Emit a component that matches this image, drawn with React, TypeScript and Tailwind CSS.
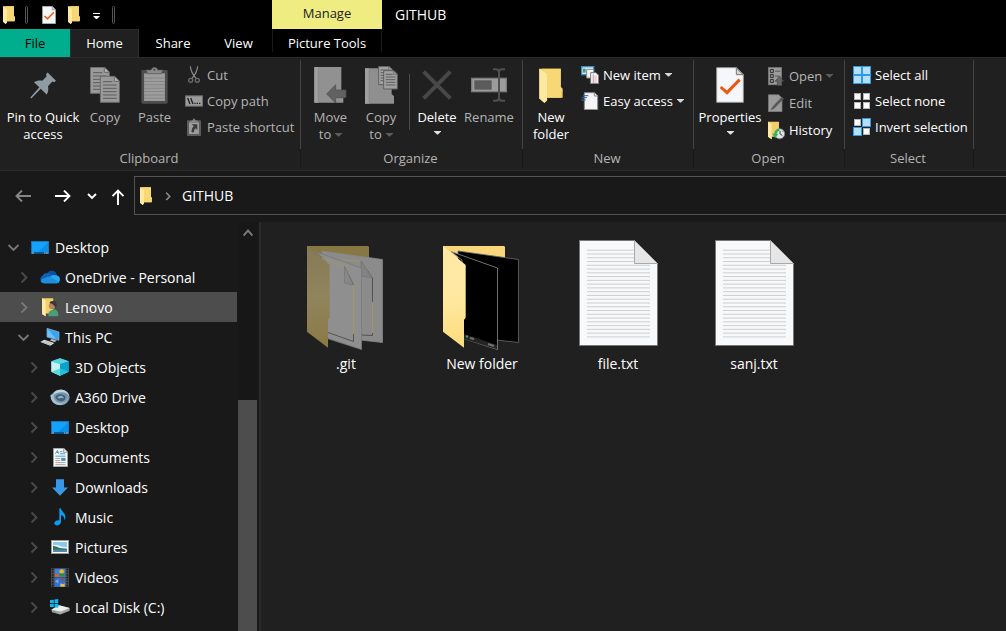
import React from "react";

type IconProps = { w: number; h: number; box: string; children: React.ReactNode };

function Svg({ w, h, box, children }: IconProps) {
  return (
    <svg width={w} height={h} viewBox={box} fill="none" aria-hidden="true" className="shrink-0">
      {children}
    </svg>
  );
}

/* ---------- shared glyphs ---------- */

function Caret({ className = "" }: { className?: string }) {
  return (
    <svg width="7" height="4" viewBox="0 0 7 4" aria-hidden="true" className={"shrink-0 " + className}>
      <path d="M0 0H7V0.500L4 3.500H3L0 0.500Z" fill="currentColor" />
    </svg>
  );
}

function Chevron({ open = false, className = "" }: { open?: boolean; className?: string }) {
  return (
    <svg width="12" height="12" viewBox="0 0 12 12" fill="none" aria-hidden="true" className={"shrink-0 " + className}>
      <path d={open ? "M0.500 4L5.500 9L10.500 4" : "M3.500 1.500L8.500 6.500L3.500 11.500"} stroke="currentColor" strokeWidth="1.900" />
    </svg>
  );
}

function FolderIcon({ w = 12, h = 18 }: { w?: number; h?: number }) {
  return (
    <Svg w={w} h={h} box="0 0 36 54">
      <path d="M0 1H33V32L36 36V46H8V54L0 47Z" fill="#f3cf6a" />
      <path d="M0 1L12 9V50L8 54L0 47Z" fill="#ffe9a2" />
      <path d="M12 9V46H33V36H36V32L33 29V1H4Z" fill="#f8d775" />
    </Svg>
  );
}

/* ---------- ribbon icons ---------- */

const PinIcon = () => (
  <Svg w={26} h={27} box="0 0 78 80">
    <path
      d="M53 1L78 26L72 30L67 28L54 42C56 50 55 60 50 67L32 50L4 79L1 76L28 45L12 30C20 25 30 24 37 26L50 12L48 6Z"
      fill="#8e9ba3"
    />
  </Svg>
);

const Sheet = ({ x, y }: { x: number; y: number }) => (
  <g transform={`translate(${x} ${y})`}>
    <path d="M1 1H44L58 15V79H1Z" fill="#9a9a9a" stroke="#6b6b6b" strokeWidth="3" />
    <path d="M43 2V16H57" fill="#b5b5b5" stroke="#5f5f5f" strokeWidth="2.500" />
    <path d="M9 17H37M9 27H50M9 37H50M9 47H50M9 57H50M9 67H50" stroke="#5c5c5c" strokeWidth="3" />
  </g>
);

const CopyIcon = () => (
  <Svg w={30} h={36} box="0 0 90 108">
    <Sheet x={0} y={0} />
    <Sheet x={30} y={27} />
  </Svg>
);

const PasteIcon = () => (
  <Svg w={27} h={37} box="0 0 80 110">
    <rect x="1" y="9" width="78" height="100" rx="4" fill="#4d4d4d" />
    <rect x="9" y="19" width="62" height="82" fill="#9d9d9d" />
    <path d="M9 33H71M9 43H71M9 53H71M9 63H71M9 73H71M9 83H71M9 93H71" stroke="#868686" strokeWidth="3" />
    <path d="M15 9H30Q32 1 40 1T50 9H65L60 20H20Z" fill="#8b8b8b" stroke="#555" strokeWidth="2" />
    <circle cx="40" cy="8" r="3" fill="#444" />
  </Svg>
);

const CutIcon = () => (
  <Svg w={12} h={18} box="0 0 36 54">
    <path d="M7 1C8 14 14 25 24 37M29 1C28 14 22 25 12 37" stroke="#8c8c8c" strokeWidth="3.500" />
    <circle cx="8" cy="43" r="6" stroke="#6d6d6d" strokeWidth="4" />
    <circle cx="28" cy="43" r="6" stroke="#6d6d6d" strokeWidth="4" />
  </Svg>
);

const CopyPathIcon = () => (
  <Svg w={18} h={12} box="0 0 54 34">
    <rect x="1.500" y="1.500" width="51" height="31" fill="#9b9b9b" stroke="#6e6e6e" strokeWidth="3" />
    <path d="M8 8L15 26M17 8L24 26" stroke="#222" strokeWidth="4" />
    <path d="M28 24H32M35 24H39M42 24H46" stroke="#222" strokeWidth="4" />
  </Svg>
);

const PasteShortcutIcon = () => (
  <Svg w={14} h={18} box="0 0 42 54">
    <rect x="0" y="7" width="42" height="47" rx="2" fill="#5c5c5c" />
    <rect x="6" y="13" width="30" height="35" fill="#9c9c9c" />
    <path d="M9 8H15L21 1L27 8H33V13H9Z" fill="#858585" />
    <path d="M14 19H31V36L26 31C22 34 21 38 21 43H14C13 36 15 30 20 25Z" fill="#3b3b3b" />
  </Svg>
);

const MoveToIcon = () => (
  <Svg w={33} h={36} box="0 0 97 108">
    <path d="M0 0H81V78L87 84V107H0Z" fill="#919191" />
    <path d="M0 0H12V107H0Z" fill="#9f9f9f" />
    <path d="M12 4V105" stroke="#868686" strokeWidth="2" />
    <path d="M37 81L64 53V69H95V92H64V108Z" fill="#616161" stroke="#4b4b4b" strokeWidth="2" />
  </Svg>
);

const MiniSheet = ({ x, y }: { x: number; y: number }) => (
  <g transform={`translate(${x} ${y})`}>
    <path d="M1 1H32L42 11V56H1Z" fill="#a0a0a0" stroke="#5f5f5f" strokeWidth="3" />
    <path d="M7 12H28M7 20H36M7 28H36M7 36H36M7 44H36" stroke="#5e5e5e" strokeWidth="3" />
    <path d="M31 2V12H41" stroke="#5f5f5f" strokeWidth="2" />
  </g>
);

const CopyToIcon = () => (
  <Svg w={33} h={38} box="0 0 99 114">
    <path d="M0 7H80V85L87 90V113H0Z" fill="#8f8f8f" />
    <path d="M0 7H12V113H0Z" fill="#9f9f9f" />
    <path d="M12 11V111" stroke="#858585" strokeWidth="2" />
    <MiniSheet x={40} y={0} />
    <MiniSheet x={55} y={13} />
  </Svg>
);

const DeleteIcon = () => (
  <Svg w={30} h={30} box="0 0 90 90">
    <path d="M5 5L85 85M85 5L5 85" stroke="#484848" strokeWidth="12" />
  </Svg>
);

const RenameIcon = () => (
  <Svg w={36} h={34} box="0 0 108 102">
    <rect x="2" y="31" width="104" height="40" fill="#9c9c9c" stroke="#7a7a7a" strokeWidth="4" />
    <rect x="10" y="37" width="52" height="28" fill="#5b5b5b" />
    <path d="M84 8V94M66 4H74Q84 4 84 13Q84 4 94 4H102M66 98H74Q84 98 84 89Q84 98 94 98H102" stroke="#4f4f4f" strokeWidth="6" />
  </Svg>
);

const NewItemIcon = () => (
  <Svg w={18} h={18} box="0 0 54 54">
    <rect x="2" y="2" width="36" height="24" fill="#d9eef8" stroke="#3b8fbd" strokeWidth="4" />
    <rect x="6" y="8" width="8" height="12" fill="#4d957c" />
    <path d="M17 10H38V36H17Z" fill="#f4f4f4" stroke="#8b8b8b" strokeWidth="3" />
    <path d="M29 20H45L53 28V53H29Z" fill="#fff" stroke="#777" strokeWidth="3" />
    <path d="M34 30H49M34 36H49M34 42H49M34 48H49" stroke="#ec9a9a" strokeWidth="2.500" />
    <path d="M37 22V52" stroke="#7fa6d8" strokeWidth="2" />
  </Svg>
);

const EasyAccessIcon = () => (
  <Svg w={18} h={18} box="0 0 54 54">
    <path d="M10 2H41L50 11V53H10Z" fill="#f5f5f7" stroke="#888" strokeWidth="3" />
    <path d="M40 3V12H49" stroke="#888" strokeWidth="3" />
    <path d="M6 11H22M2 17H18M0 24H14" stroke="#2a6ca4" strokeWidth="3" />
  </Svg>
);

const CheckPage = ({ w, h }: { w: number; h: number }) => (
  <Svg w={w} h={h} box="0 0 84 108">
    <path d="M2 2H62L82 22V106H2Z" fill="#f6f7fa" stroke="#979797" strokeWidth="3" />
    <path d="M61 3V23H81Z" fill="#d6d6d6" stroke="#777" strokeWidth="3" />
    <path d="M14 60L33 77L71 38" stroke="#f0560f" strokeWidth="9" />
  </Svg>
);

const OpenIcon = () => (
  <Svg w={16} h={19} box="0 0 48 56">
    <rect x="1" y="1" width="40" height="52" fill="#9b9b9b" stroke="#777" strokeWidth="2" />
    <path d="M7 7H16V16H7ZM7 22H16V31H7ZM7 37H16V46H7Z" fill="#8f8f8f" stroke="#333" strokeWidth="3" />
    <path d="M21 12H37M21 27H37" stroke="#555" strokeWidth="3" />
    <path d="M34 28L47 42H41V55H28V42H21Z" fill="#666" stroke="#444" strokeWidth="2" />
  </Svg>
);

const EditIcon = () => (
  <Svg w={16} h={18} box="0 0 48 54">
    <path d="M1 2H32L42 12V53H1Z" fill="#9a9a9a" stroke="#777" strokeWidth="2" />
    <path d="M8 49L13 39L41 9L47 14L18 44Z" fill="#555" stroke="#777" strokeWidth="1" />
  </Svg>
);

const HistoryIcon = () => (
  <Svg w={17} h={19} box="0 0 51 56">
    <path d="M0 2H33V47H11V54L0 47Z" fill="#f3cf6a" />
    <path d="M0 2L11 9V54L0 47Z" fill="#ffe9a2" />
    <circle cx="35" cy="38" r="15" fill="#dfe3e3" stroke="#7f8a8a" strokeWidth="2" />
    <path d="M36 38V29M36 38L43 43M44 31L46 29" stroke="#444" strokeWidth="3" />
    <path d="M33 22Q19 26 19 38H12L22 51L31 38H26Q27 31 35 28Z" fill="#35b556" />
  </Svg>
);

type Cell = "blue" | "white";
const Tiles = ({ cells, backed = false }: { cells: Cell[]; backed?: boolean }) => (
  <Svg w={18} h={18} box="0 0 18 18">
    {backed && <rect width="18" height="18" fill="#2f9be8" />}
    {cells.map((c, i) => {
      const x = i % 2 === 0 ? 1 : 10;
      const y = i < 2 ? 1 : 10;
      return c === "blue" ? (
        <g key={i}>
          <rect x={x - 1} y={y - 1} width="9" height="9" fill="#2f9be8" />
          <rect x={x} y={y} width="7" height="7" fill="#b5dffc" />
        </g>
      ) : (
        <rect key={i} x={x + 0.5} y={y + 0.5} width="6" height="6" fill="#fff" stroke="#b5b5b5" />
      );
    })}
  </Svg>
);

/* ---------- ribbon parts ---------- */

type BigProps = {
  icon: React.ReactNode;
  lines: string[];
  width: string;
  dim?: boolean;
  inlineCaret?: boolean;
  caret?: boolean;
};

function BigButton({ icon, lines, width, dim, inlineCaret, caret }: BigProps) {
  return (
    <button
      type="button"
      className={`flex shrink-0 flex-col items-center pt-2 text-[13px] leading-[17px] whitespace-nowrap ${width} ${dim ? "text-[#b4b4b4]" : "text-white"}`}
    >
      <span className="mb-[5px] flex h-[38px] items-center">{icon}</span>
      {lines.map((line, i) => (
        <span key={line} className="flex items-center gap-1">
          {line}
          {inlineCaret && i === lines.length - 1 && <Caret className="text-[#5a5a5a]" />}
        </span>
      ))}
      {caret && (
        <span className="flex h-[14px] items-center">
          <Caret className="text-[#e0e0e0]" />
        </span>
      )}
    </button>
  );
}

type SmallProps = { icon: React.ReactNode; label: string; dim?: boolean; caret?: boolean };

function SmallButton({ icon, label, dim, caret }: SmallProps) {
  return (
    <button
      type="button"
      className={`flex h-[26px] items-center gap-1 text-[13px] leading-[18px] whitespace-nowrap ${dim ? "text-[#b4b4b4]" : "text-white"}`}
    >
      <span className="flex w-[18px] justify-center">{icon}</span>
      <span>{label}</span>
      {caret && <Caret className={dim ? "text-[#5a5a5a]" : "text-[#d8d8d8]"} />}
    </button>
  );
}

function Group({ label, width, children }: { label: string; width: string; children: React.ReactNode }) {
  return (
    <section aria-label={label} className={`flex shrink-0 flex-col ${width}`}>
      <div className="mt-[2px] flex h-[89px] shrink-0 border-r border-[#444]">
        <div className="-mt-[2px] flex w-full">{children}</div>
      </div>
      <h2 className="border-r border-[#191919] pr-[2px] text-center text-[13px] leading-[19px] text-[#b4b4b4]">{label}</h2>
    </section>
  );
}

/* ---------- tree icons ---------- */

const DesktopIcon = () => (
  <Svg w={18} h={13} box="0 0 54 39">
    <rect x="1" y="1" width="52" height="37" fill="#16a1fb" stroke="#0b79c4" strokeWidth="2" />
    <path d="M20 35L52 3V35Z" fill="#0b90ea" />
    <path d="M3 36H51" stroke="#0d3d66" strokeWidth="4" />
    <path d="M4 36H8M40 36H43M46 36H50" stroke="#fff" strokeWidth="3" />
  </Svg>
);

const OneDriveIcon = () => (
  <Svg w={20} h={14} box="0 0 60 40">
    <path d="M10 37A11 11 0 0 1 8 16C12 8 20 9 22 9C28 -3 48 -2 50 15C60 16 62 30 56 35Z" fill="#0f62b8" />
    <path d="M22 9C30 9 36 16 50 15C48 -2 28 -3 22 9Z" fill="#0a4ea3" />
    <path d="M2 32C8 24 24 24 32 18C38 14 46 13 52 16C64 20 61 38 50 39H12Q5 38 2 32Z" fill="#28a8ea" />
    <path d="M2 32C8 24 24 18 32 20L58 36Q55 39 50 39H12Q5 38 2 32Z" fill="#1c8fe0" />
  </Svg>
);

const UserFolderIcon = () => (
  <Svg w={17} h={19} box="0 0 50 56">
    <path d="M0 1H33V46H10V54L0 47Z" fill="#f3cf6a" />
    <path d="M0 1L11 8V54L0 47Z" fill="#ffe9a2" />
    <path d="M19 54Q17 39 28 35L39 33Q50 39 48 54Z" fill="#4a9c78" />
    <circle cx="30" cy="23" r="10" fill="#b5895f" />
    <path d="M22 15Q24 7 34 9Q45 11 43 25L39 31Q38 19 22 15Z" fill="#3a3632" />
  </Svg>
);

const PcIcon = () => (
  <Svg w={20} h={18} box="0 0 58 54">
    <path d="M20 1L56 12V37L20 27Z" fill="#36a4f5" stroke="#9fb5c6" strokeWidth="2" />
    <path d="M21 2L48 33L21 26Z" fill="#72c0f8" />
    <path d="M35 33L50 38L42 42L28 37Z" fill="#bfc5cb" />
    <path d="M0 42L12 35L42 45L30 53Z" fill="#e1e4e8" />
    <path d="M7 42L30 50M12 39L35 47" stroke="#979da6" strokeWidth="2" />
  </Svg>
);

const CubeIcon = () => (
  <Svg w={18} h={18} box="0 0 56 54">
    <path d="M28 0L55 9V42L28 54L1 42V9Z" fill="#20b4cf" />
    <path d="M1 9L28 18V54L1 42Z" fill="#c4f3f5" />
    <path d="M28 18L55 9V42L28 54Z" fill="#08a0cc" />
    <path d="M1 42L28 32V54Z" fill="#5bd7de" />
    <path d="M28 32L55 42L28 54Z" fill="#25c1dc" />
    <path d="M1 9L28 0L55 9L28 18Z" fill="#5bd2dd" />
  </Svg>
);

const A360Icon = () => (
  <Svg w={20} h={17} box="0 0 60 50">
    <ellipse cx="31" cy="25" rx="28" ry="23" fill="#7493ab" />
    <path d="M10 18Q12 2 34 1Q56 4 59 24Q52 9 36 9Q18 9 10 18Z" fill="#c0d4df" />
    <path d="M1 18Q6 14 12 16Q9 32 22 39Q34 45 50 36Q40 49 24 47Q2 41 1 18Z" fill="#a9c1cf" />
    <path d="M16 24Q20 14 34 15Q48 18 46 28Q43 36 33 36Q21 34 16 24Z" fill="#3f5f78" />
    <path d="M22 25Q26 19 35 20Q43 23 41 28Q36 25 31 27Q26 29 22 25Z" fill="#93adbf" />
    <path d="M52 20Q57 34 46 42Q38 47 28 46Q44 42 49 32Z" fill="#8fabbd" />
  </Svg>
);

const DocumentIcon = () => (
  <Svg w={15} h={19} box="0 0 44 56">
    <path d="M1 1H32L43 12V55H1Z" fill="#f8f8f8" stroke="#999" strokeWidth="2" />
    <path d="M31 2V13H42" fill="#ddd" stroke="#888" strokeWidth="2" />
    <path d="M7 17L13 7L16 17M10 13H16" stroke="#2b8ac8" strokeWidth="2.500" />
    <path d="M20 11H28M20 17H36M7 24H37" stroke="#2b8ac8" strokeWidth="2.500" />
    <path d="M7 31H21M7 37H21M7 43H37M7 49H37" stroke="#999" strokeWidth="2.500" />
    <rect x="24" y="29" width="13" height="9" fill="#4e8fba" />
  </Svg>
);

const DownloadIcon = () => (
  <Svg w={16} h={17} box="0 0 48 50">
    <path d="M12 0H36V25H48L24 50L0 25H12Z" fill="#3997e8" />
  </Svg>
);

const MusicIcon = () => (
  <Svg w={12} h={18} box="0 0 36 52">
    <path d="M16 0H20C22 10 36 15 34 28Q34 32 31 36Q32 23 21 20V41C20 49 12 52 6 51Q-1 48 1 43Q4 35 16 36Z" fill="#0a9cf7" />
  </Svg>
);

const PictureIcon = () => (
  <Svg w={18} h={14} box="0 0 54 42">
    <rect x="1.500" y="1.500" width="51" height="39" fill="#fff" stroke="#9a9a9a" strokeWidth="3" />
    <rect x="6" y="6" width="42" height="30" fill="#8fc8ef" />
    <path d="M6 15Q16 12 26 17T48 21V25H6Z" fill="#e0f1fb" />
    <path d="M6 17Q18 19 26 24L48 27V30H6Z" fill="#39705d" />
    <path d="M6 29H48V36H6Z" fill="#4f8cab" />
  </Svg>
);

const VideoIcon = () => (
  <Svg w={18} h={19} box="0 0 54 56">
    <rect width="54" height="56" fill="#4e4e4e" />
    <path d="M5 2V56M49 2V56" stroke="#161616" strokeWidth="5" strokeDasharray="4 4" />
    <rect x="11" y="2" width="32" height="25" fill="#3f7fdd" />
    <rect x="11" y="30" width="32" height="26" fill="#356fd2" />
    <path d="M12 18Q20 14 27 25H12Z" fill="#e8553d" />
    <circle cx="32" cy="10" r="7" fill="#e6b92d" />
    <path d="M24 16H41V25H26Z" fill="#2e8b45" />
    <path d="M29 30H41L35 39Z" fill="#b33b30" />
    <path d="M27 55L29 45L36 48L41 45V56Z" fill="#eec22f" />
    <path d="M12 39L22 33V46Z" fill="#78a9ef" />
  </Svg>
);

const DiskIcon = () => (
  <Svg w={20} h={16} box="0 0 58 46">
    <path d="M4 31L26 18L57 26V34L30 45L6 38Z" fill="#a6a6a6" />
    <path d="M4 31L26 18L57 26L31 36Z" fill="#ededed" />
    <path d="M10 36L17 38" stroke="#36b44a" strokeWidth="3" />
    <path d="M0 3L11 2V12H0ZM13 1L24 0V12H13ZM0 14H11V24L0 23ZM13 14H24V25L13 24Z" fill="#12b4ee" />
  </Svg>
);

/* ---------- navigation tree ---------- */

type Node = { label: string; icon: React.ReactNode; level: 0 | 1 | 2; open?: boolean; selected?: boolean };

const tree: Node[] = [
  { label: "Desktop", icon: <DesktopIcon />, level: 0, open: true },
  { label: "OneDrive - Personal", icon: <OneDriveIcon />, level: 1 },
  { label: "Lenovo", icon: <UserFolderIcon />, level: 1, selected: true },
  { label: "This PC", icon: <PcIcon />, level: 1, open: true },
  { label: "3D Objects", icon: <CubeIcon />, level: 2 },
  { label: "A360 Drive", icon: <A360Icon />, level: 2 },
  { label: "Desktop", icon: <DesktopIcon />, level: 2 },
  { label: "Documents", icon: <DocumentIcon />, level: 2 },
  { label: "Downloads", icon: <DownloadIcon />, level: 2 },
  { label: "Music", icon: <MusicIcon />, level: 2 },
  { label: "Pictures", icon: <PictureIcon />, level: 2 },
  { label: "Videos", icon: <VideoIcon />, level: 2 },
  { label: "Local Disk (C:)", icon: <DiskIcon />, level: 2 },
];

const indent = ["pl-2", "pl-[18px]", "pl-[28px]"];

/* ---------- file tiles ---------- */

function LargeFolder({ hidden = false }: { hidden?: boolean }) {
  const id = hidden ? "cover-hidden" : "cover";
  return (
    <Svg w={96} h={116} box="0 0 96 116">
      <defs>
        <linearGradient id={id} x1="9" y1="8" x2="31" y2="110" gradientUnits="userSpaceOnUse">
          <stop stopColor={hidden ? "#857a56" : "#ffe9a6"} />
          <stop offset="0.500" stopColor={hidden ? "#90845c" : "#ffe8a0"} />
          <stop offset="1" stopColor={hidden ? "#8a7a42" : "#fddb7c"} />
        </linearGradient>
      </defs>
      <path d="M9 8H70L71 9V60H9Z" fill={hidden ? "#877843" : "#f8d67a"} />
      <path
        d="M24 13L84.500 21.500V104.500L62 102L24 96Z"
        fill={hidden ? "#8b8b8b" : "#000"}
        stroke={hidden ? "#858585" : "#686868"}
        strokeWidth="0.800"
      />
      {hidden && (
        <>
          <path d="M63 23L74.500 40V64M74.500 95V97.500L63 97" stroke="#4c4c4c" strokeWidth="0.900" />
          <path d="M42 22L63 23L70 33M74.500 64V95" stroke="#a49561" strokeWidth="0.900" />
          <path d="M63 23V38L74.500 40Z" fill="#828282" stroke="#707070" strokeWidth="0.600" />
        </>
      )}
      <path
        d="M17 13.500L63.500 30V111.500L28 100V22Z"
        fill={hidden ? "#8f8f8f" : "#000"}
        stroke={hidden ? "#787878" : "#8a918e"}
        strokeWidth="0.800"
      />
      {hidden ? (
        <>
          <path d="M55.500 96V103.500L30 94.500M46.500 28.500L55.500 47" stroke="#4c4c4c" strokeWidth="0.900" />
          <path d="M24 20L46.500 28.500L51 38M55.500 47V96" stroke="#a49561" strokeWidth="0.900" />
          <path d="M46.500 28.500V45L55.500 47Z" fill="#888" stroke="#707070" strokeWidth="0.600" />
        </>
      ) : (
        <>
          <path d="M30 96L63 107V111L30 101Z" fill="#242424" />
          <path d="M32 98L34 99" stroke="#3f9b68" strokeWidth="2" />
          <path d="M36 100L40 101M54 106L60 108" stroke="#7b7066" strokeWidth="2" />
        </>
      )}
      <path d="M9 8L31.700 27V79.500L30 82V109.700L9 93.700Z" fill={`url(#${id})`} />
    </Svg>
  );
}

function TextFile() {
  const rules = Array.from({ length: 24 }, (_, i) => 12.2 + i * 3.77);
  return (
    <Svg w={96} h={116} box="0 0 96 116">
      <path d="M9.500 2.500H64.500L87.500 25.500V107.500H9.500Z" fill="#f8f9fa" stroke="#777" />
      {rules.map((y, i) => (
        <path key={y} d={`M17 ${y}H${i < 4 ? 64 : 80}`} stroke="#c9cacb" strokeWidth="0.900" />
      ))}
      <path d="M64.500 2.500L87.500 25.500H64.500Z" fill="#e6e6e6" stroke="#a9a9a9" />
    </Svg>
  );
}

const files = [
  { name: ".git", icon: <LargeFolder hidden /> },
  { name: "New folder", icon: <LargeFolder /> },
  { name: "file.txt", icon: <TextFile /> },
  { name: "sanj.txt", icon: <TextFile /> },
];

/* ---------- window ---------- */

export default function App() {
  return (
    <div className="flex min-h-screen flex-col overflow-hidden bg-[#191919] font-['Open_Sans','Noto_Sans',sans-serif] text-white">
      <header className="flex bg-black text-[13px]">
        <div className="w-[272px] shrink-0">
          <div className="flex h-[29px] items-center pl-[3px]">
            <FolderIcon />
            <span className="ml-[10px] h-[18px] w-[3px] rounded-sm border border-[#555]" />
            <button type="button" aria-label="Properties" className="ml-[14px]">
              <CheckPage w={14} h={18} />
            </button>
            <button type="button" aria-label="New folder" className="ml-3">
              <FolderIcon />
            </button>
            <button type="button" aria-label="Customize Quick Access Toolbar" className="ml-[13px] pt-[3px]">
              <Svg w={7} h={7} box="0 0 7 7">
                <path d="M0 0H7V1H0ZM0 3H7L4 6H3Z" fill="#fff" />
              </Svg>
            </button>
            <span className="ml-[12px] h-[18px] w-[3px] rounded-sm border border-[#555]" />
          </div>
          <div className="flex h-[28px] leading-[18px]">
            <button type="button" className="w-[70px] bg-[#00ae8e] text-black">File</button>
            <button type="button" className="w-[69px] border-x border-t border-[#2b2b2b] bg-[#202020] pb-px">Home</button>
            <button type="button" className="w-[68px]">Share</button>
            <button type="button" className="w-[63px]">View</button>
          </div>
        </div>
        <div className="flex w-[110px] shrink-0 flex-col">
          <div className="flex h-[29px] items-center justify-center bg-[#efed82] pb-[2px] text-[#202020]">Manage</div>
          <button type="button" className="h-[23px] border-x border-[#1a1a1a] pt-[5px] text-center leading-[18px]">
            Picture Tools
          </button>
        </div>
        <h1 className="flex h-[29px] items-center pl-[13px] text-[14px]">GITHUB</h1>
      </header>

      <div className="flex h-[114px] shrink-0 border-y border-[#2b2b2b] bg-[#202020]">
        <Group label="Clipboard" width="w-[301px]">
          <BigButton width="w-[86px]" icon={<PinIcon />} lines={["Pin to Quick", "access"]} />
          <BigButton width="w-[38px]" icon={<CopyIcon />} lines={["Copy"]} dim />
          <BigButton width="w-[61px]" icon={<PasteIcon />} lines={["Paste"]} dim />
          <div className="flex flex-col pt-1">
            <SmallButton icon={<CutIcon />} label="Cut" dim />
            <SmallButton icon={<CopyPathIcon />} label="Copy path" dim />
            <SmallButton icon={<PasteShortcutIcon />} label="Paste shortcut" dim />
          </div>
        </Group>
        <Group label="Organize" width="w-[222px]">
          <BigButton width="w-[59px]" icon={<MoveToIcon />} lines={["Move", "to"]} dim inlineCaret />
          <BigButton width="w-[42px]" icon={<CopyToIcon />} lines={["Copy", "to"]} dim inlineCaret />
          <span className="mt-4 ml-[7px] h-[56px] w-px bg-[#4a4a4a]" />
          <BigButton width="w-[54px]" icon={<DeleteIcon />} lines={["Delete"]} caret />
          <BigButton width="w-[50px]" icon={<RenameIcon />} lines={["Rename"]} dim />
        </Group>
        <Group label="New" width="w-[171px]">
          <BigButton width="w-[56px]" icon={<FolderIcon w={24} h={35} />} lines={["New", "folder"]} />
          <div className="flex flex-col pt-1 pl-[2px]">
            <SmallButton icon={<NewItemIcon />} label="New item" caret />
            <SmallButton icon={<EasyAccessIcon />} label="Easy access" caret />
          </div>
        </Group>
        <Group label="Open" width="w-[151px]">
          <BigButton width="w-[72px]" icon={<CheckPage w={28} h={36} />} lines={["Properties"]} caret />
          <div className="flex flex-col gap-px pt-[5px] pl-px">
            <SmallButton icon={<OpenIcon />} label="Open" dim caret />
            <SmallButton icon={<EditIcon />} label="Edit" dim />
            <SmallButton icon={<HistoryIcon />} label="History" />
          </div>
        </Group>
        <Group label="Select" width="w-[129px]">
          <div className="flex flex-col pt-1 pl-2">
            <SmallButton icon={<Tiles cells={["blue", "blue", "blue", "blue"]} backed />} label="Select all" />
            <SmallButton icon={<Tiles cells={["white", "white", "white", "white"]} />} label="Select none" />
            <SmallButton icon={<Tiles cells={["white", "blue", "blue", "white"]} />} label="Invert selection" />
          </div>
        </Group>
      </div>

      <nav aria-label="Address" className="flex h-[51px] shrink-0 items-center pb-[2px] pl-[15px]">
        <button type="button" aria-label="Back" className="text-[#868686]">
          <Svg w={16} h={12} box="0 0 16 12">
            <path d="M16 6H1.500M7 0.500L1.500 6L7 11.500" stroke="currentColor" strokeWidth="1.900" />
          </Svg>
        </button>
        <button type="button" aria-label="Forward" className="ml-6">
          <Svg w={16} h={12} box="0 0 16 12">
            <path d="M0 6H14.500M9 0.500L14.500 6L9 11.500" stroke="currentColor" strokeWidth="1.900" />
          </Svg>
        </button>
        <button type="button" aria-label="Recent locations" className="ml-4">
          <Svg w={10} h={8} box="0 0 10 8">
            <path d="M1 2L5 6L9 2" stroke="currentColor" strokeWidth="1.900" />
          </Svg>
        </button>
        <button type="button" aria-label="Up" className="ml-[15px] pt-[3px]">
          <Svg w={12} h={16} box="0 0 12 16">
            <path d="M6 16V1.500M0.500 7L6 1.500L11.500 7" stroke="currentColor" strokeWidth="1.900" />
          </Svg>
        </button>
        <div className="ml-[10px] flex h-[39px] flex-1 items-center border border-r-0 border-[#535353] pl-[5px]">
          <FolderIcon />
          <Chevron className="ml-[10px] scale-75 text-[#8a8a8a]" />
          <button type="button" className="ml-2 text-[14px]">GITHUB</button>
        </div>
      </nav>

      <div className="flex flex-1">
        <aside className="w-[237px] shrink-0 pt-[10px]">
          <ul>
            {tree.map((n, i) => (
              <li key={i}>
                <button
                  type="button"
                  className={`flex h-[30px] w-full items-center text-[14px] whitespace-nowrap ${indent[n.level]} ${n.selected ? "bg-[#4d4d4d]" : ""}`}
                >
                  <Chevron open={n.open} className={n.open || n.selected ? "text-[#777]" : "text-[#4a4a4a]"} />
                  <span className="mr-[5px] ml-[10px] flex w-5 justify-center">{n.icon}</span>
                  {n.label}
                </button>
              </li>
            ))}
          </ul>
        </aside>
        <div className="ml-px flex w-[19px] shrink-0 flex-col bg-[#171717]">
          <button type="button" aria-label="Scroll up" className="flex h-[21px] items-center justify-center text-[#7a7a7a]">
            <Svg w={10} h={8} box="0 0 10 8">
              <path d="M0.500 6.500L5 1.500L9.500 6.500" stroke="currentColor" strokeWidth="1.900" />
            </Svg>
          </button>
          <div className="mt-[157px] flex-1 bg-[#4d4d4d]" />
        </div>
        <main className="ml-[2px] flex flex-1 items-start border-l-2 border-[#2b2b2b] bg-[#202020] pt-4 pl-[17px]">
          {files.map((f) => (
            <button key={f.name} type="button" className="flex w-[136px] flex-col items-center text-[14px] leading-5">
              {f.icon}
              <span>{f.name}</span>
            </button>
          ))}
        </main>
      </div>
    </div>
  );
}
